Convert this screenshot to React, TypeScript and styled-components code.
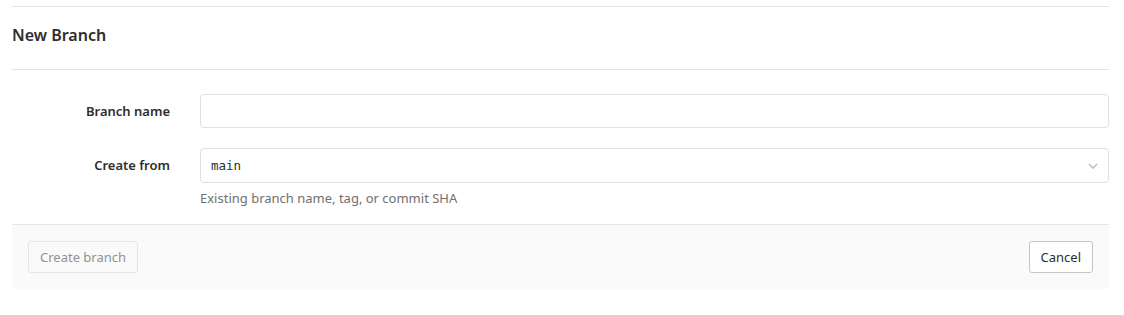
import React from 'react';
import styled, { createGlobalStyle } from 'styled-components';

const GlobalStyle = createGlobalStyle`
  body {
    margin: 0;
    background: #fff;
    font-family: "Noto Sans", "Open Sans", sans-serif;
    color: #2e2e2e;
  }
`;

const Page = styled.div`
  padding: 6px 15px 0 12px;
`;

const PageTitle = styled.h3`
  margin: 0;
  border-top: 1px solid #e5e5e5;
  border-bottom: 1px solid #e5e5e5;
  box-sizing: border-box;
  height: 64px;
  padding-bottom: 6px;
  display: flex;
  align-items: center;
  font-size: 16px;
  font-weight: 600;
  color: #2e2e2e;
`;

const Form = styled.form`
  padding-top: 24px;
`;

const Row = styled.div<{ $last?: boolean }>`
  display: grid;
  grid-template-columns: 158px 1fr;
  column-gap: 30px;
  margin-bottom: ${({ $last }) => ($last ? '0' : '20px')};
`;

const Label = styled.label`
  text-align: right;
  font-size: 13px;
  font-weight: 600;
  color: #2e2e2e;
  line-height: 34px;
`;

const Field = styled.div`
  display: flex;
  flex-direction: column;
`;

const Input = styled.input`
  box-sizing: border-box;
  height: 34px;
  border: 1px solid #dfdfdf;
  border-radius: 4px;
  padding: 6px 10px;
  font-size: 14px;
  outline: none;
`;

const Select = styled.div`
  box-sizing: border-box;
  height: 35px;
  border: 1px solid #dfdfdf;
  border-radius: 4px;
  padding: 0 10px;
  display: flex;
  align-items: center;
  justify-content: space-between;
  font-family: "DejaVu Sans Mono", "Liberation Mono", monospace;
  font-size: 12.5px;
  color: #2e2e2e;
`;

const Help = styled.p`
  margin: 6px 0 0;
  font-size: 13px;
  color: #707070;
`;

const Footer = styled.div`
  margin-top: 17px;
  border-top: 1px solid #e5e5e5;
  background: #fafafa;
  height: 64px;
  padding: 0 16px;
  display: flex;
  align-items: center;
  justify-content: space-between;
`;

const Button = styled.button<{ $disabled?: boolean }>`
  box-sizing: border-box;
  height: 32px;
  padding: 0 11px;
  border: 1px solid ${({ $disabled }) => ($disabled ? '#e5e5e5' : '#c6c6c6')};
  border-radius: 3px;
  font-family: "Noto Sans", "Open Sans", sans-serif;
  font-size: 13px;
  color: ${({ $disabled }) => ($disabled ? '#919191' : '#2e2e2e')};
  background: ${({ $disabled }) => ($disabled ? '#fafafa' : '#fff')};
`;

const Chevron = () => (
  <svg width="10" height="6" viewBox="0 0 10 6" fill="none">
    <path d="M1 1l4 4 4-4" stroke="#c0c0c0" strokeWidth="1.6" />
  </svg>
);

export default function App() {
  return (
    <>
      <GlobalStyle />
      <Page>
        <PageTitle>New Branch</PageTitle>
        <Form onSubmit={(e) => e.preventDefault()}>
          <Row>
            <Label>Branch name</Label>
            <Field>
              <Input />
            </Field>
          </Row>
          <Row $last>
            <Label>Create from</Label>
            <Field>
              <Select>
                <span>main</span>
                <Chevron />
              </Select>
              <Help>Existing branch name, tag, or commit SHA</Help>
            </Field>
          </Row>
          <Footer>
            <Button $disabled type="button">Create branch</Button>
            <Button type="button">Cancel</Button>
          </Footer>
        </Form>
      </Page>
    </>
  );
}
